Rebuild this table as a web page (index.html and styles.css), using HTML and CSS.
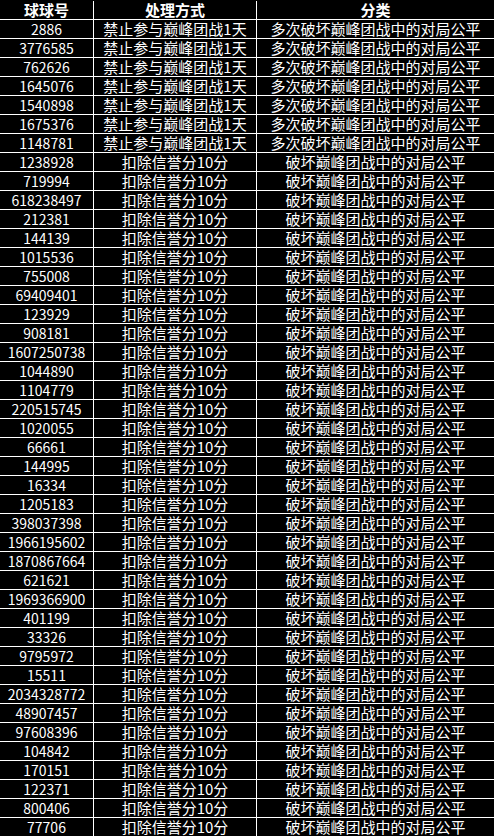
FILE: index.html
```html
<!DOCTYPE html>
<html lang="zh">
<head>
<meta charset="utf-8">
<link rel="stylesheet" href="styles.css">
</head>
<body>
<div class="table" id="t">
  <div class="row head"><div class="cell">球球号</div><div class="cell">处理方式</div><div class="cell">分类</div></div>
</div>
<script>
var a=["2886","3776585","762626","1645076","1540898","1675376","1148781"];
var b=["1238928","719994","618238497","212381","144139","1015536","755008","69409401","123929","908181","1607250738","1044890","1104779","220515745","1020055","66661","144995","16334","1205183","398037398","1966195602","1870867664","621621","1969366900","401199","33326","9795972","15511","2034328772","48907457","97608396","104842","170151","122371","800406","77706"];
var t=document.getElementById('t');var h='';
a.forEach(function(n){h+='<div class="row"><div class="cell num">'+n+'</div><div class="cell">禁止参与巅峰团战1天</div><div class="cell">多次破坏巅峰团战中的对局公平</div></div>';});
b.forEach(function(n){h+='<div class="row"><div class="cell num">'+n+'</div><div class="cell">扣除信誉分10分</div><div class="cell">破坏巅峰团战中的对局公平</div></div>';});
t.insertAdjacentHTML('beforeend',h);
</script>
</body>
</html>
```
FILE: styles.css
```css
html, body { margin: 0; padding: 0; background: #000; }
body { width: 494px; height: 837px; overflow: hidden; }
.table { display: flex; flex-direction: column; border-bottom: 1px solid #fff; }
.row {
  display: grid;
  grid-template-columns: 93px 163px 238px;
  height: 19px;
  box-sizing: border-box;
  border-top: 1px solid #fff;
  font-family: "Noto Sans CJK SC", "Noto Sans", sans-serif;
  font-size: 15px;
  color: #fff;
}
.row.head { border-top-color: #000; }
.cell {
  box-sizing: border-box;
  text-align: center;
  line-height: 18px;
  white-space: nowrap;
}
.cell.num { font-size: 14px; }
.cell + .cell { border-left: 1px solid #fff; }
.head .cell { font-weight: bold; }
```
